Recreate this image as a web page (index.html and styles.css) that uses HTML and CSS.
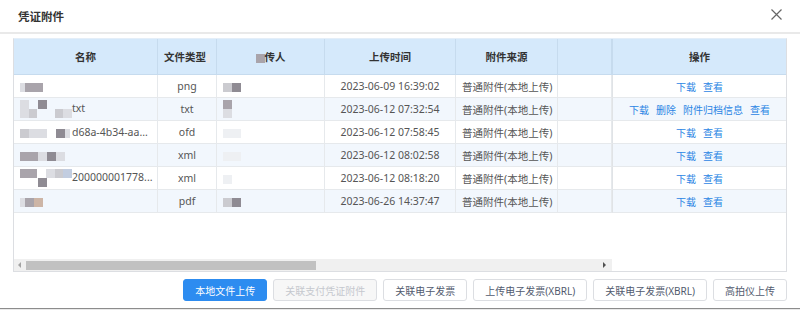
FILE: index.html
```html
<!DOCTYPE html>
<html lang="zh-CN">
<head>
<meta charset="UTF-8">
<title>凭证附件</title>
<link rel="stylesheet" href="styles.css">
</head>
<body>
  <div class="dialog">
    <div class="dialog-head">
      <span class="dialog-title">凭证附件</span>
      <span class="dialog-close">
        <svg width="11" height="11" viewBox="0 0 11 11"><path d="M0.5 0.5L10.5 10.5M10.5 0.5L0.5 10.5" stroke="#666" stroke-width="1.2" fill="none"/></svg>
      </span>
    </div>

    <div class="dialog-body">
      <div class="grid">
        <table class="grid-table">
          <colgroup>
            <col style="width:144px"><col style="width:59px"><col style="width:108px">
            <col style="width:131px"><col style="width:102px"><col style="width:54px"><col style="width:174px">
          </colgroup>
          <thead>
            <tr>
              <th>名称</th>
              <th>文件类型<i class="px p-fade"></i></th>
              <th><i class="px p-mid"></i>传人</th>
              <th>上传时间</th>
              <th>附件来源</th>
              <th></th>
              <th class="col-ops">操作</th>
            </tr>
          </thead>
          <tbody>
            <tr>
              <td class="name"><span class="mosaic"><i class="px-s p-pale"></i><i class="px p-mid"></i><i class="px p-mid"></i></span></td>
              <td class="center">png</td>
              <td class="who"><i class="px p-light"></i><i class="px p-dark"></i></td>
              <td class="center">2023-06-09 16:39:02</td>
              <td>普通附件(本地上传)</td>
              <td></td>
              <td class="ops"><a>下载</a><a>查看</a></td>
            </tr>
            <tr>
              <td class="name"><span class="mosaic stack"><span class="mrow"><i class="px p-pale"></i><i class="px p-blank"></i><i class="px p-dark"></i></span><span class="mrow"><i class="px p-pale"></i><i class="px p-light"></i><i class="px p-blank"></i><i class="px p-blank"></i><i class="px p-light"></i><i class="px p-pale"></i></span></span>txt</td>
              <td class="center">txt</td>
              <td class="who stackcell"><span class="mosaic stack"><i class="px p-mid"></i><i class="px p-pale"></i></span></td>
              <td class="center">2023-06-12 07:32:54</td>
              <td>普通附件(本地上传)</td>
              <td></td>
              <td class="ops"><a>下载</a><a>删除</a><a>附件归档信息</a><a>查看</a></td>
            </tr>
            <tr>
              <td class="name"><span class="mosaic"><i class="px p-light"></i><i class="px p-pale"></i><i class="px p-pale"></i><i class="px p-blank"></i><i class="px p-dark"></i><i class="px-s p-pale"></i></span>d68a-4b34-aa...</td>
              <td class="center">ofd</td>
              <td class="who"><i class="px p-ghost"></i><i class="px p-ghost"></i></td>
              <td class="center">2023-06-12 07:58:45</td>
              <td>普通附件(本地上传)</td>
              <td></td>
              <td class="ops"><a>下载</a><a>查看</a></td>
            </tr>
            <tr>
              <td class="name"><span class="mosaic"><i class="px p-mid"></i><i class="px p-mid"></i><i class="px p-pale"></i><i class="px p-dark"></i><i class="px p-pale"></i></span></td>
              <td class="center">xml</td>
              <td class="who"><i class="px p-ghost"></i><i class="px p-ghost"></i></td>
              <td class="center">2023-06-12 08:02:58</td>
              <td>普通附件(本地上传)</td>
              <td></td>
              <td class="ops"><a>下载</a><a>查看</a></td>
            </tr>
            <tr>
              <td class="name"><span class="mosaic stack"><span class="mrow"><i class="px p-mid"></i><i class="px p-mid"></i><i class="px p-blank"></i><i class="px p-pale"></i><i class="px p-light"></i><i class="px p-blue"></i></span><span class="mrow"><i class="px p-blank"></i><i class="px p-blank"></i><i class="px p-dark"></i></span></span>200000001778...</td>
              <td class="center">xml</td>
              <td class="who"><i class="px p-ghost"></i></td>
              <td class="center">2023-06-12 08:18:20</td>
              <td>普通附件(本地上传)</td>
              <td></td>
              <td class="ops"><a>下载</a><a>查看</a></td>
            </tr>
            <tr>
              <td class="name"><span class="mosaic"><i class="px-s p-pale"></i><i class="px p-mid"></i><i class="px p-tan"></i></span></td>
              <td class="center">pdf</td>
              <td class="who"><i class="px p-light"></i><i class="px p-dark"></i></td>
              <td class="center">2023-06-26 14:37:47</td>
              <td>普通附件(本地上传)</td>
              <td></td>
              <td class="ops"><a>下载</a><a>查看</a></td>
            </tr>
          </tbody>
        </table>
        <div class="grid-fill"></div>
        <div class="grid-foot">
          <div class="hscroll">
            <span class="arrow-left"></span>
            <span class="thumb"></span>
            <span class="arrow-right"></span>
          </div>
        </div>
      </div>

      <div class="actions">
        <button class="btn btn-primary">本地文件上传</button>
        <button class="btn" disabled>关联支付凭证附件</button>
        <button class="btn">关联电子发票</button>
        <button class="btn">上传电子发票(XBRL)</button>
        <button class="btn">关联电子发票(XBRL)</button>
        <button class="btn">高拍仪上传</button>
      </div>
    </div>
  </div>
</body>
</html>
```

FILE: styles.css
```css
body {
  margin: 0;
  background: #e9e9e9;
  font-family: "Noto Sans", "Noto Sans CJK SC", sans-serif;
  font-size: 10.5px;
  color: #555;
}
.dialog {
  background: #fff;
  height: 308px;
  border-bottom: 1px solid #8c8c8c;
}
.dialog-head {
  height: 34px;
  box-sizing: border-box;
  border-bottom: 2px solid #e9e9e9;
  display: flex;
  align-items: center;
  justify-content: space-between;
  padding: 0 18px;
}
.dialog-title {
  font-size: 11.5px;
  font-weight: bold;
  color: #333;
  margin-top: -1px;
}
.dialog-close {
  display: flex;
  margin-top: -3px;
}
.dialog-body {
  padding: 4px 13px 0;
}
.grid {
  width: 774px;
  height: 234px;
  box-sizing: border-box;
  border: 1px solid #dcdee2;
  border-top-color: #e4eef8;
  display: flex;
  flex-direction: column;
}
.grid-table {
  width: 772px;
  table-layout: fixed;
  border-collapse: separate;
  border-spacing: 0;
}
.grid-table th {
  background: #d5e9fb;
  color: #333;
  font-weight: bold;
  height: 36px;
  box-sizing: border-box;
  border-right: 1px solid #c6dbee;
  border-bottom: 1px solid #c6dbee;
  padding: 0;
  white-space: nowrap;
}
.grid-table th:last-child,
.grid-table td:last-child {
  border-right: none;
}
.grid-table th .px {
  vertical-align: middle;
}
.grid-table tbody tr {
  height: 23px;
}
.grid-table tbody tr:nth-child(even) td {
  background: #f2f7fd;
}
.grid-table td {
  border-right: 1px solid #e6e9ec;
  border-bottom: 1px solid #e6e9ec;
  padding: 0 6px;
  white-space: nowrap;
  overflow: hidden;
  box-sizing: border-box;
  height: 23px;
}
.grid-table td.ops {
  border-left: 1px solid #e0e3e6;
}
.grid-table th.col-ops {
  border-left: 1px solid #c6dbee;
}
.center {
  text-align: center;
}
.name {
  padding-left: 5px;
}
.who {
  padding-left: 5px;
}
.ops {
  text-align: center;
  font-size: 10px;
}
.ops a {
  color: #2b85e4;
  margin: 0 3.5px;
  cursor: pointer;
}
.mosaic {
  display: inline-flex;
  vertical-align: middle;
  width: 52px;
}
.mosaic.stack {
  flex-direction: column;
}
.mrow {
  display: flex;
}
.who .mosaic.stack {
  width: 9px;
}
.px {
  display: inline-block;
  width: 9px;
  height: 9px;
  vertical-align: middle;
}
.px-s {
  display: inline-block;
  width: 5px;
  height: 9px;
  vertical-align: middle;
}
.p-pale { background: #dcdde2; }
.p-light { background: #cbcbd0; }
.p-mid { background: #a9a4ab; }
.p-dark { background: #8f8b93; }
.p-ghost { background: #eef0f3; }
.p-fade { background: #e6e8ec; width: 4px; }
.p-blank { background: transparent; }
.p-blue { background: #c2cde0; }
.p-tan { background: #cdb5a6; }

.grid-fill {
  flex: 1;
}
.grid-foot {
  height: 12px;
  display: flex;
}
.hscroll {
  width: 598px;
  height: 12px;
  background: #f0f0f0;
  display: flex;
  align-items: center;
}
.arrow-left {
  width: 0;
  height: 0;
  border-top: 3px solid transparent;
  border-bottom: 3px solid transparent;
  border-right: 3px solid #a3a3a3;
  margin-left: 4px;
}
.thumb {
  width: 290px;
  height: 9px;
  background: #c1c1c1;
  margin-left: 5px;
}
.arrow-right {
  width: 0;
  height: 0;
  border-top: 3px solid transparent;
  border-bottom: 3px solid transparent;
  border-left: 3px solid #505050;
  margin-left: auto;
  margin-right: 6px;
}
.actions {
  display: flex;
  justify-content: flex-end;
  gap: 6px;
  margin-top: 7px;
  width: 774px;
}
.btn {
  height: 22px;
  padding: 0 11px;
  font-family: "Noto Sans", "Noto Sans CJK SC", sans-serif;
  font-size: 10px;
  color: #515a6e;
  background: #fff;
  border: 1px solid #dcdee2;
  border-radius: 3px;
  cursor: pointer;
  white-space: nowrap;
}
.btn-primary {
  background: #2d8cf0;
  border-color: #2d8cf0;
  color: #fff;
}
.btn[disabled] {
  background: #f7f7f7;
  color: #c5c8ce;
  cursor: not-allowed;
}
```
